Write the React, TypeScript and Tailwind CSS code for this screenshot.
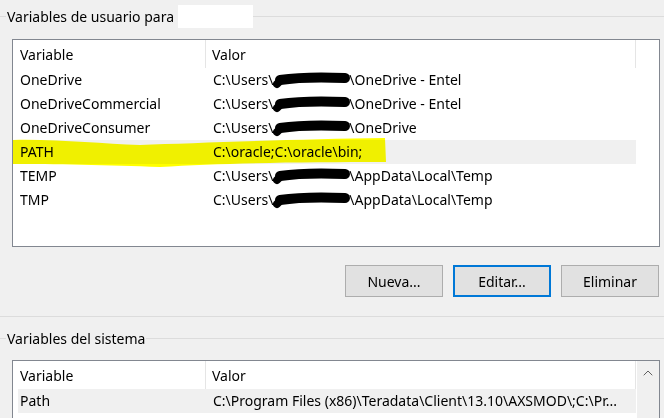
import { ChevronUp } from "lucide-react";

type Row = { name: string; value: string; hidden?: boolean; selected?: boolean };

const userVars: Row[] = [
  { name: "OneDrive", value: "OneDrive - Entel", hidden: true },
  { name: "OneDriveCommercial", value: "OneDrive - Entel", hidden: true },
  { name: "OneDriveConsumer", value: "OneDrive", hidden: true },
  { name: "PATH", value: "C:\\oracle;C:\\oracle\\bin;", selected: true },
  { name: "TEMP", value: "AppData\\Local\\Temp", hidden: true },
  { name: "TMP", value: "AppData\\Local\\Temp", hidden: true },
];

function GroupTitle({ title, blank }: { title: string; blank?: boolean }) {
  return (
    <div className="flex h-8 items-center">
      <div className="h-px w-[6px] bg-[#dcdcdc]" />
      <span className="px-px">{title}</span>
      {blank && <div className="ml-[3px] h-[23px] w-[75px] bg-white" />}
      <div className="h-px flex-1 bg-[#dcdcdc]" />
    </div>
  );
}

function Header() {
  return (
    <div className="flex h-[28px] items-center">
      <div className="flex h-full w-[193px] items-center border-r border-[#e5e5e5] pl-[7px]">Variable</div>
      <div className="flex h-full w-[430px] items-center border-r border-[#e5e5e5] pl-[6px]">Valor</div>
    </div>
  );
}

function VarRow({ row }: { row: Row }) {
  return (
    <div className={`flex h-6 w-[623px] items-center pb-px ${row.selected ? "bg-[#f0f0f0]" : ""}`}>
      <div className="w-[193px] pl-[7px]">{row.name}</div>
      <div className="pl-[7px] whitespace-nowrap">
        {row.hidden ? (
          <>
            C:\Users\<span className="inline-block w-[76px]" />\{row.value}
          </>
        ) : (
          row.value
        )}
      </div>
    </div>
  );
}

function Button({ label, focused }: { label: string; focused?: boolean }) {
  return (
    <button
      className={`h-8 w-[98px] bg-[#e1e1e1] ${
        focused ? "border-2 border-[#0078d7]" : "border border-[#adadad]"
      }`}
    >
      {label}
    </button>
  );
}

function Marks() {
  const rows = [80, 104, 128, 176, 200];
  return (
    <svg className="pointer-events-none absolute left-0 top-0" width="664" height="418">
      <path
        d="M13 140 C60 139 100 144 140 145 C200 143 300 139 385 138 L386 162 C300 162 220 163 160 167 C110 165 50 164 13 164 Z"
        fill="#ffff00"
        style={{ mixBlendMode: "multiply" }}
      />
      {rows.map((c) => (
        <g key={c} fill="none" stroke="#000" strokeLinecap="round">
          <path d={`M280 ${c} C300 ${c - 3} 322 ${c - 3} 345 ${c - 2}`} strokeWidth="10" />
          <path d={`M277 ${c + 4} L280 ${c + 1}`} strokeWidth="8" />
        </g>
      ))}
    </svg>
  );
}

export default function App() {
  return (
    <div
      className="relative h-[418px] w-[664px] overflow-hidden bg-[#f0f0f0] text-[14px] text-black"
      style={{ fontFamily: '"Noto Sans", "Open Sans", sans-serif' }}
    >
      <GroupTitle title="Variables de usuario para" blank />
      <div className="ml-3 mt-[7px] h-[208px] w-[648px] border border-[#828790] bg-white">
        <Header />
        {userVars.map((r) => (
          <VarRow key={r.name} row={r} />
        ))}
      </div>
      <div className="mt-[18px] flex justify-end gap-[10px] pr-[5px]">
        <Button label="Nueva..." />
        <Button label="Editar..." focused />
        <Button label="Eliminar" />
      </div>
      <div className="mt-[19px] h-px bg-[#dcdcdc]" />
      <div className="mt-[5px]">
        <GroupTitle title="Variables del sistema" />
      </div>
      <div className="ml-3 mt-[6px] flex h-[80px] w-[648px] border border-[#828790] bg-white">
        <div className="flex-1">
          <Header />
          <div className="ml-[5px] flex h-6 w-[618px] items-center bg-[#f0f0f0] pb-px">
            <div className="w-[188px] pl-[2px]">Path</div>
            <div className="pl-[7px] whitespace-nowrap">
              C:\Program Files (x86)\Teradata\Client\13.10\AXSMOD\;C:\Pr...
            </div>
          </div>
        </div>
        <div className="flex w-[22px] justify-center bg-[#f0f0f0] pt-[4px]">
          <ChevronUp size={16} strokeWidth={1.5} className="text-[#606060]" />
        </div>
      </div>
      <Marks />
    </div>
  );
}
